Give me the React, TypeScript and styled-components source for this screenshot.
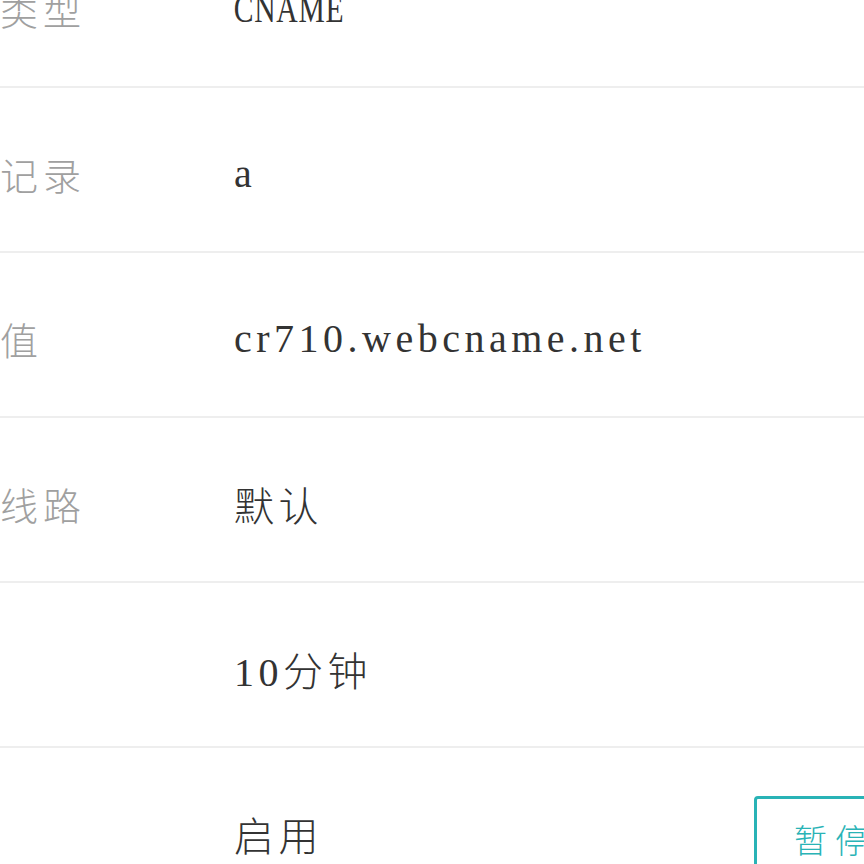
import React from 'react'
import styled, { createGlobalStyle, css } from 'styled-components'

const GlobalStyle = createGlobalStyle`
  html, body {
    margin: 0;
    padding: 0;
    background: #fff;
    overflow: hidden;
  }
`

const List = styled.div`
  width: 912px;
  margin-top: -77px;
  font-family: "Liberation Serif", "Noto Sans CJK SC", serif;
  font-weight: 300;
`

const Row = styled.div`
  display: flex;
  align-items: center;
  padding-top: 8px;
  height: 155px;
  border-bottom: 2px solid #eeeeee;
`

const Label = styled.div`
  width: 233px;
  flex-shrink: 0;
  font-size: 38px;
  letter-spacing: 5px;
  color: #a0a0a0;
`

const condensedStyles = css`
  letter-spacing: 1px;
  transform: scaleX(0.74);
  transform-origin: left center;
`

const Value = styled.div<{ $condensed?: boolean }>`
  flex: 1;
  font-size: 40px;
  letter-spacing: 4.5px;
  color: #333;
  padding-left: 1px;
  ${p => p.$condensed && condensedStyles};
`

const PauseButton = styled.button`
  width: 158px;
  height: 86px;
  margin-top: 10px;
  box-sizing: border-box;
  border: 3px solid #29b3b6;
  border-radius: 4px;
  background: #fff;
  color: #29b3b6;
  font-family: "Noto Sans CJK SC", sans-serif;
  font-weight: 300;
  font-size: 33px;
  letter-spacing: 8px;
  padding: 0 0 0 4px;
`

const records: { label: string; value: string; condensed?: boolean; action?: string }[] = [
  { label: '类型', value: 'CNAME', condensed: true },
  { label: '记录', value: 'a' },
  { label: '值', value: 'cr710.webcname.net' },
  { label: '线路', value: '默认' },
  { label: '', value: '10分钟' },
  { label: '', value: '启用', action: '暂停' },
]

export default function App() {
  return (
    <>
      <GlobalStyle />
      <List>
        {records.map((r, i) => (
          <Row key={i}>
            <Label>{r.label}</Label>
            <Value $condensed={r.condensed}>{r.value}</Value>
            {r.action && <PauseButton>{r.action}</PauseButton>}
          </Row>
        ))}
      </List>
    </>
  )
}
